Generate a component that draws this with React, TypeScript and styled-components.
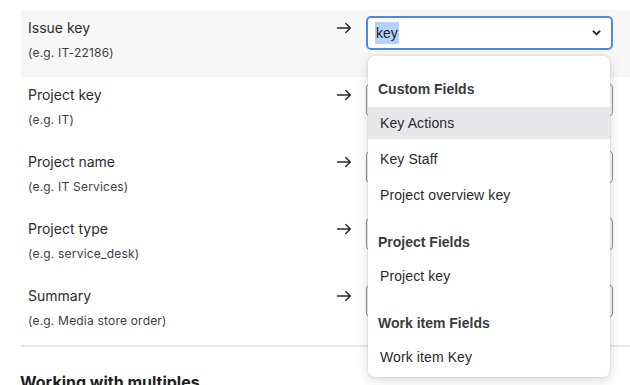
import * as React from 'react';
import styled, { createGlobalStyle } from 'styled-components';

const GlobalStyle = createGlobalStyle`
  html, body {
    margin: 0;
    padding: 0;
    background: #ffffff;
    overflow: hidden;
  }
  body {
    font-family: Inter, "Liberation Sans", sans-serif;
    color: #2b2b2b;
  }
`;

const Page = styled.div`
  width: 630px;
  height: 385px;
  padding: 10px 0 0 21px;
  box-sizing: border-box;
  overflow: hidden;
`;

const List = styled.div`
  display: flex;
  flex-direction: column;
`;

const Row = styled.div<{ $active?: boolean }>`
  height: 67px;
  box-sizing: border-box;
  padding: 6px 17px 0 7px;
  display: grid;
  grid-template-columns: 1fr 16px 247px;
  column-gap: 14px;
  align-items: start;
  background: ${(p) => (p.$active ? '#f7f7f7' : 'transparent')};
`;

const Labels = styled.div`
  display: flex;
  flex-direction: column;
  padding-top: 2px;
`;

const Label = styled.div`
  font-family: Inter, "Liberation Sans", sans-serif;
  font-size: 14px;
  line-height: 20px;
  color: #2c2c2e;
`;

const Example = styled.div`
  margin-top: 6px;
  font-family: Inter, "Liberation Sans", sans-serif;
  font-size: 12px;
  line-height: 18px;
  letter-spacing: 0.2px;
  color: #3d3d3f;
`;

const Arrow = styled.svg`
  margin-top: 4px;
  display: block;
`;

const SelectWrap = styled.div`
  position: relative;
`;

const Select = styled.div<{ $focused?: boolean }>`
  height: 34px;
  box-sizing: border-box;
  border: ${(p) => (p.$focused ? '2px solid #4a88e9' : '1px solid #8e8e8e')};
  border-radius: 5px;
  background: #ffffff;
  display: flex;
  align-items: center;
  justify-content: space-between;
  padding: ${(p) => (p.$focused ? '0 10px 0 8px' : '0 11px 0 9px')};
  font-family: "Liberation Sans", Arial, sans-serif;
  font-size: 14px;
  color: #222222;
`;

const Selected = styled.span`
  background: #b3d3fb;
  padding: 1px 1px;
  margin-left: -1px;
  line-height: 20px;
`;

const Menu = styled.div`
  position: absolute;
  top: 40px;
  left: 2px;
  width: 242px;
  background: #ffffff;
  border-radius: 7px;
  box-shadow: 0 0 0 1px rgba(0, 0, 0, 0.04), 0 3px 12px rgba(0, 0, 0, 0.16);
  padding: 4px 0 2px;
  display: flex;
  flex-direction: column;
  z-index: 10;
`;

const GroupTitle = styled.div`
  padding: 19px 10px 6px;
  line-height: 20px;
  font-family: "Liberation Sans", Arial, sans-serif;
  font-size: 14px;
  font-weight: 700;
  color: #3a3a3c;
`;

const Option = styled.div<{ $hover?: boolean }>`
  height: 32px;
  margin: 2px 0;
  padding: 0 12px;
  display: flex;
  align-items: center;
  font-family: "Liberation Sans", Arial, sans-serif;
  font-size: 14px;
  letter-spacing: 0.1px;
  color: #2a2a2c;
  background: ${(p) => (p.$hover ? '#e8e8ea' : 'transparent')};
`;

const Divider = styled.div`
  border-top: 2px solid #e4e4e4;
`;

const Heading = styled.h2`
  margin: 23px 0 0 -1px;
  font-family: Inter, "Liberation Sans", sans-serif;
  font-size: 16px;
  line-height: 24px;
  font-weight: 700;
  color: #1e1e1e;
`;

const fields = [
  { label: 'Issue key', example: '(e.g. IT-22186)' },
  { label: 'Project key', example: '(e.g. IT)' },
  { label: 'Project name', example: '(e.g. IT Services)' },
  { label: 'Project type', example: '(e.g. service_desk)' },
  { label: 'Summary', example: '(e.g. Media store order)' }
];

const groups = [
  { title: 'Custom Fields', options: ['Key Actions', 'Key Staff', 'Project overview key'] },
  { title: 'Project Fields', options: ['Project key'] },
  { title: 'Work item Fields', options: ['Work item Key'] }
];

const ArrowIcon = () => (
  <Arrow width="16" height="16" viewBox="0 0 16 16" fill="none">
    <path
      d="M1.5 8H14.3M9.8 3.5L14.3 8L9.8 12.5"
      stroke="#2b2b2b"
      strokeWidth="1.5"
      strokeLinecap="round"
      strokeLinejoin="round"
    />
  </Arrow>
);

const Chevron = () => (
  <svg width="9" height="6" viewBox="0 0 9 6" fill="none">
    <path
      d="M1.5 1.4L4.5 4.4L7.5 1.4"
      stroke="#2a2a2a"
      strokeWidth="2"
      strokeLinecap="round"
      strokeLinejoin="round"
    />
  </svg>
);

const App = () => {
  return (
    <Page>
      <GlobalStyle />
      <List>
        {fields.map((field, i) => (
          <Row key={field.label} $active={i === 0}>
            <Labels>
              <Label>{field.label}</Label>
              <Example>{field.example}</Example>
            </Labels>
            <ArrowIcon />
            <SelectWrap>
              <Select $focused={i === 0}>
                {i === 0 ? <Selected>key</Selected> : <span />}
                <Chevron />
              </Select>
              {i === 0 && (
                <Menu>
                  {groups.map((group) => (
                    <React.Fragment key={group.title}>
                      <GroupTitle>{group.title}</GroupTitle>
                      {group.options.map((opt) => (
                        <Option key={opt} $hover={opt === 'Key Actions'}>
                          {opt}
                        </Option>
                      ))}
                    </React.Fragment>
                  ))}
                </Menu>
              )}
            </SelectWrap>
          </Row>
        ))}
      </List>
      <Divider />
      <Heading>Working with multiples</Heading>
    </Page>
  );
};

export default App;
